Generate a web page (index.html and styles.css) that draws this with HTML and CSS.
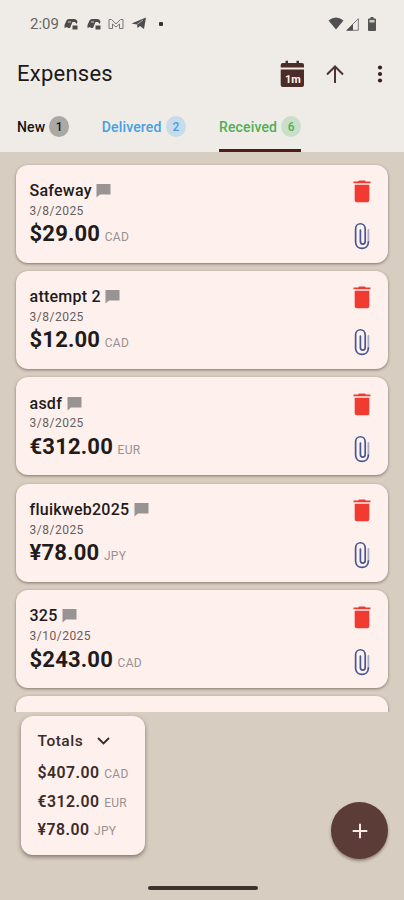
FILE: index.html
```html
<!DOCTYPE html>
<html lang="en">
<head>
<meta charset="utf-8">
<title>Expenses</title>
<link rel="stylesheet" href="styles.css">
</head>
<body>
<svg class="defs" width="0" height="0">
  <symbol id="note" viewBox="0 0 15 15"><path d="M.5 1h14v10.500H4L.5 14.500z" fill="#979493"/></symbol>
  <symbol id="trash" viewBox="0 0 18 24"><path d="M.5 1.500H5L6.200.5h5.600l1.200 1h4.500v1.700H.5zM1.700 4.700h14.600V20.300q0 2-2 2H3.700q-2 0-2-2z" fill="#f13a30"/></symbol>
  <symbol id="clip" viewBox="0 0 16 28"><path d="M14.400 8v12" fill="none" stroke="#a9aac8" stroke-width="1.800" stroke-linecap="round"/><path d="M14.400 20c0 8.500-12.800 8.500-12.800 0V7c0-7 9.600-7 9.600 0v12.500c0 3.500-4.800 3.500-4.800 0V8" fill="none" stroke="#465891" stroke-width="1.700" stroke-linecap="round"/></symbol>
  <symbol id="car" viewBox="0 0 15 12"><path d="M.5 10V7l2-4.500q.5-1.500 2.500-1.500h5q3 0 3.500 3L12.500 6 11 4H8.500L6 10H4L3 9zM8.500 7.500h5v4h-5z" fill="#4c4c4c"/><path d="M4 4h3" stroke="#cfccc9"/></symbol>
</svg>
<div class="screen">
  <header class="header">
    <div class="status">
      <span class="time">2:09</span>
      <svg class="car" width="15" height="12"><use href="#car"/></svg>
      <svg class="car second" width="15" height="12"><use href="#car"/></svg>
      <svg class="mail" width="16" height="12" viewBox="0 0 16 12"><path d="M1 1.500h2.500L8 6l4.500-4.500H15v9h-3.500V6L8 9 4.500 6v4.500H1z" fill="none" stroke="#777" stroke-width="1"/></svg>
      <svg class="plane" width="16" height="13" viewBox="0 0 16 13"><path d="M.5 6.500 15 .5l-2 11.500-4-3-2.500 2-.5-3.500z" fill="#4c4c4c"/><path d="M6 7.500 12 3" stroke="#c9c6c3" stroke-width=".8"/></svg>
      <span class="dot"></span>
      <span class="spacer"></span>
      <svg class="wifi" width="16" height="13" viewBox="0 0 16 13"><path d="M.5 3.500q7.500-6 15 0L8 12.500z" fill="#505050"/></svg>
      <svg class="signal" width="13" height="13" viewBox="0 0 13 13"><path d="M.7 12.300 12.300.7v11.600z" fill="none" stroke="#777" stroke-width="1"/><path d="M.5 12.500 7 6v6.500z" fill="#505050"/></svg>
      <svg class="battery" width="8" height="14" viewBox="0 0 8 14"><path d="M2.500 0h3v1.500H7q1 0 1 1V13q0 1-1 1H1q-1 0-1-1V2.500q0-1 1-1h1.500z" fill="#555"/><path d="M1.500 3h5v2.500h-5z" fill="#d0cdca"/></svg>
    </div>
    <div class="bar">
      <h1 class="title">Expenses</h1>
      <svg class="calendar" width="25" height="28" viewBox="0 0 25 28"><path d="M.7 7.500V5q0-2 2-2H5.500V.7h2.500V3h8.500V.7H19V3h3q2 0 2 2v2.500zM.7 9.500H24V25q0 2-2 2H2.700q-2 0-2-2z" fill="#4c2c29"/><text x="12.800" y="23" text-anchor="middle" class="caltext">1m</text></svg>
      <svg class="arrow" width="18" height="19" viewBox="0 0 18 19"><path d="M9 18V1.800M1 9.500l8-8 8 8" fill="none" stroke="#4b3434" stroke-width="2"/></svg>
      <svg class="more" width="6" height="20" viewBox="0 0 6 20"><g fill="#3c2021"><circle cx="3" cy="3.500" r="2.100"/><circle cx="3" cy="10" r="2.100"/><circle cx="3" cy="16.500" r="2.100"/></g></svg>
    </div>
    <nav class="tabs">
      <div class="tab new">New<span class="badge">1</span></div>
      <div class="tab delivered">Delivered<span class="badge">2</span></div>
      <div class="tab received">Received<span class="badge">6</span></div>
    </nav>
  </header>
  <main class="list">
    <article class="card">
      <div class="info"><div class="name">Safeway<svg width="15" height="15"><use href="#note"/></svg></div><div class="date">3/8/2025</div><div class="amount">$29.00<small>CAD</small></div></div>
      <div class="actions"><svg width="18" height="24"><use href="#trash"/></svg><svg width="16" height="28"><use href="#clip"/></svg></div>
    </article>
    <article class="card">
      <div class="info"><div class="name">attempt 2<svg width="15" height="15"><use href="#note"/></svg></div><div class="date">3/8/2025</div><div class="amount">$12.00<small>CAD</small></div></div>
      <div class="actions"><svg width="18" height="24"><use href="#trash"/></svg><svg width="16" height="28"><use href="#clip"/></svg></div>
    </article>
    <article class="card">
      <div class="info"><div class="name">asdf<svg width="15" height="15"><use href="#note"/></svg></div><div class="date">3/8/2025</div><div class="amount">€312.00<small>EUR</small></div></div>
      <div class="actions"><svg width="18" height="24"><use href="#trash"/></svg><svg width="16" height="28"><use href="#clip"/></svg></div>
    </article>
    <article class="card">
      <div class="info"><div class="name">fluikweb2025<svg width="15" height="15"><use href="#note"/></svg></div><div class="date">3/8/2025</div><div class="amount">¥78.00<small>JPY</small></div></div>
      <div class="actions"><svg width="18" height="24"><use href="#trash"/></svg><svg width="16" height="28"><use href="#clip"/></svg></div>
    </article>
    <article class="card">
      <div class="info"><div class="name">325<svg width="15" height="15"><use href="#note"/></svg></div><div class="date">3/10/2025</div><div class="amount">$243.00<small>CAD</small></div></div>
      <div class="actions"><svg width="18" height="24"><use href="#trash"/></svg><svg width="16" height="28"><use href="#clip"/></svg></div>
    </article>
    <article class="card"></article>
  </main>
  <footer class="footer">
    <section class="totals">
      <div class="totals-head">Totals<svg width="13" height="8" viewBox="0 0 13 8"><path d="m1 1 5.500 5.500L12 1" fill="none" stroke="#3b2c2a" stroke-width="1.900"/></svg></div>
      <div class="total">$407.00<small>CAD</small></div>
      <div class="total">€312.00<small>EUR</small></div>
      <div class="total">¥78.00<small>JPY</small></div>
    </section>
    <div class="fab"><svg width="16" height="16" viewBox="0 0 16 16"><path d="M8 .7v14.600M.7 8h14.600" stroke="#fbe9e6" stroke-width="2"/></svg></div>
  </footer>
  <div class="home"></div>
</div>
</body>
</html>
```
FILE: styles.css
```css
* { box-sizing: border-box; }
body { margin: 0; font-family: Roboto, "Liberation Sans", sans-serif; color: #211b1a; }
svg { display: block; flex: none; }
.defs { position: absolute; }
.screen { width: 404px; height: 900px; display: flex; flex-direction: column; overflow: hidden; background: #d7cdc0; }
.header { height: 152px; flex: none; background: #efece7; display: flex; flex-direction: column; }
.status { height: 47px; display: flex; align-items: center; padding: 0 28px 0 30px; }
.time { width: 29px; font-size: 15px; line-height: 16px; color: #666; }
.car { margin: 1px 8px 0 5px; }
.second { margin-left: 0; margin-right: 6px; }
.mail { margin-right: 7px; }
.dot { width: 4px; height: 4px; border-radius: 1px; background: #333; margin-left: 12px; }
.spacer { flex: 1; }
.wifi { margin-right: 1px; }
.signal { margin: 1px 9px 0 1px; }
.bar { height: 54px; display: flex; align-items: center; padding: 0 21px 0 17px; }
.title { flex: 1; margin: 0; font-size: 22px; font-weight: 400; line-height: 28px; letter-spacing: .25px; color: #1b1817; }
.calendar { margin-right: 21px; }
.caltext { font: 700 11px Roboto, sans-serif; fill: #fff1ed; }
.arrow { margin-right: 33px; }
.tabs { flex: 1; display: flex; padding-left: 17px; }
.tab { height: 51px; display: flex; align-items: center; gap: 4px; font-size: 14px; font-weight: 500; letter-spacing: .15px; padding-top: 3px; border-bottom: 3px solid transparent; }
.badge { width: 20px; height: 21px; border-radius: 50%; display: flex; align-items: center; justify-content: center; font-size: 12px; font-weight: 500; letter-spacing: 0; }
.new { margin-right: 32.500px; color: #171313; }
.new .badge { background: #aba8a5; }
.delivered { gap: 4.500px; margin-right: 33px; color: #45a0e2; }
.delivered .badge { background: #c7dbe9; }
.received { color: #4fae56; border-color: #4c1d1f; }
.received .badge { background: #cbdfc8; }
.list { height: 560px; flex: none; overflow: hidden; padding: 12.500px 16px 0; display: flex; flex-direction: column; gap: 8.400px; }
.card { height: 98px; flex: none; display: flex; justify-content: space-between; background: #fef0ed; border-radius: 12px; padding: 15.500px 17px 0 13.500px; box-shadow: 0 1px 3px rgba(60, 45, 35, .55); }
.name { height: 20.500px; display: flex; align-items: center; gap: 4.500px; font-size: 16px; font-weight: 500; letter-spacing: .25px; }
.date { height: 20.500px; line-height: 20.500px; font-size: 12px; letter-spacing: .5px; color: #665e5c; }
.amount { height: 26px; line-height: 26px; font-size: 22px; font-weight: 700; letter-spacing: .2px; }
small { margin-left: 4.500px; font-size: 12px; font-weight: 400; letter-spacing: .3px; color: #999190; }
.actions { width: 18px; display: flex; flex-direction: column; align-items: center; gap: 18px; }
.footer { height: 168px; flex: none; display: flex; justify-content: space-between; align-items: flex-start; padding: 4px 16px 0 21px; }
.totals { width: 124px; height: 139px; background: #fef0ed; border-radius: 12px; padding: 10px 16.500px 0; box-shadow: 0 2px 4px rgba(60, 45, 35, .55); }
.totals-head { height: 29px; display: flex; align-items: center; gap: 14px; font-size: 15.500px; font-weight: 500; letter-spacing: .5px; color: #3b2c2a; }
.total { height: 28.700px; line-height: 36px; font-size: 15.800px; font-weight: 600; letter-spacing: .5px; color: #3b2c2a; white-space: nowrap; }
.fab { width: 57px; height: 57px; margin-top: 86px; border-radius: 50%; background: #5b3c36; display: flex; align-items: center; justify-content: center; box-shadow: 0 2px 3px rgba(60, 45, 35, .45); }
.home { width: 110px; height: 4px; flex: none; margin: 6px 0 0 147.500px; border-radius: 2px; background: #3e342f; }
```
